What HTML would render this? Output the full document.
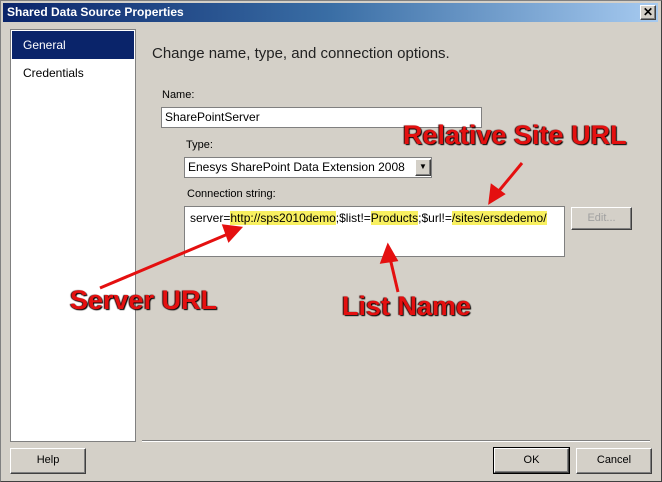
<!DOCTYPE html>
<html><head><style>
body{margin:0;width:662px;height:482px;background:#d4d0c8;font-family:"Liberation Sans",sans-serif;position:relative;overflow:hidden}
.a{position:absolute}
.t{font-size:11px;color:#000}
.btn{position:absolute;background:#d4d0c8;border:1px solid;border-color:#fff #404040 #404040 #fff;box-shadow:inset -1px -1px #808080;font-size:11px;text-align:center;line-height:23px}
.red{position:absolute;color:#e41010;font-weight:bold;font-size:27px;text-shadow:1px 1px 1px #000,-1px 0 1px #300}
.hl{background:#f8f060}
</style></head><body>
<div class="a" style="left:0;top:0;width:660px;height:480px;border:1px solid #808080;border-right-color:#404040;border-bottom-color:#404040"></div>
<div class="a" style="left:3px;top:3px;width:655px;height:19px;background:linear-gradient(90deg,#0a246a,#3a6ea5 50%,#a6caf0)"></div>
<div class="a" style="left:7px;top:5px;color:#fff;font-weight:bold;font-size:12px">Shared Data Source Properties</div>
<div class="btn" style="left:640px;top:5px;width:14px;height:13px;line-height:12px;font-size:12px;font-weight:bold">✕</div>
<div class="a" style="left:10px;top:29px;width:124px;height:411px;background:#fff;border:1px solid #808080"></div>
<div class="a" style="left:12px;top:31px;width:122px;height:28px;background:#0a246a"></div>
<div class="a t" style="left:23px;top:38px;color:#fff;font-size:12px">General</div>
<div class="a t" style="left:23px;top:66px;font-size:12px">Credentials</div>
<div class="a" style="left:152px;top:45px;font-size:15px;color:#222">Change name, type, and connection options.</div>
<div class="a t" style="left:162px;top:89px">Name:</div>
<div class="a" style="left:161px;top:107px;width:319px;height:19px;background:#fff;border:1px solid #808080;font-size:12px;line-height:19px;text-indent:3px">SharePointServer</div>
<div class="a t" style="left:186px;top:139px">Type:</div>
<div class="a" style="left:184px;top:157px;width:246px;height:19px;background:#fff;border:1px solid #808080;font-size:12px;line-height:19px;text-indent:3px">Enesys SharePoint Data Extension 2008</div>
<div class="btn" style="left:415px;top:159px;width:14px;height:15px;line-height:14px;font-size:8px">▼</div>
<div class="a t" style="left:187px;top:188px">Connection string:</div>
<div class="a" style="left:184px;top:206px;width:379px;height:49px;background:#fff;border:1px solid #808080"></div>
<div class="a" style="left:190px;top:210px;font-size:12px;line-height:16px;white-space:nowrap">server=<span class="hl">http://sps2010demo</span>;$list!=<span class="hl">Products</span>;$url!=<span class="hl">/sites/ersdedemo/</span></div>
<div class="btn" style="left:571px;top:207px;width:59px;height:21px;line-height:21px;color:#a0a0a0">Edit...</div>
<div class="a" style="left:142px;top:440px;width:508px;height:1px;background:#808080;border-bottom:1px solid #fff"></div>
<div class="btn" style="left:10px;top:448px;width:74px;height:24px">Help</div>
<div class="btn" style="left:494px;top:448px;width:73px;height:23px;outline:1px solid #000">OK</div>
<div class="btn" style="left:576px;top:448px;width:74px;height:24px">Cancel</div>
<svg class="a" style="left:0;top:0" width="662" height="482">
<g stroke="#e41010" stroke-width="3" fill="#e41010">
<line x1="522" y1="163" x2="498" y2="192"/><polygon points="490,202 492,186 503,194"/>
<line x1="100" y1="288" x2="228" y2="234"/><polygon points="240,228 224,226 229,240"/>
<line x1="398" y1="292" x2="390" y2="258"/><polygon points="388,246 382,262 396,260"/>
</g></svg>
<div class="red" style="left:403px;top:120px">Relative Site URL</div>
<div class="red" style="left:70px;top:285px">Server URL</div>
<div class="red" style="left:342px;top:291px">List Name</div>
</body></html>
